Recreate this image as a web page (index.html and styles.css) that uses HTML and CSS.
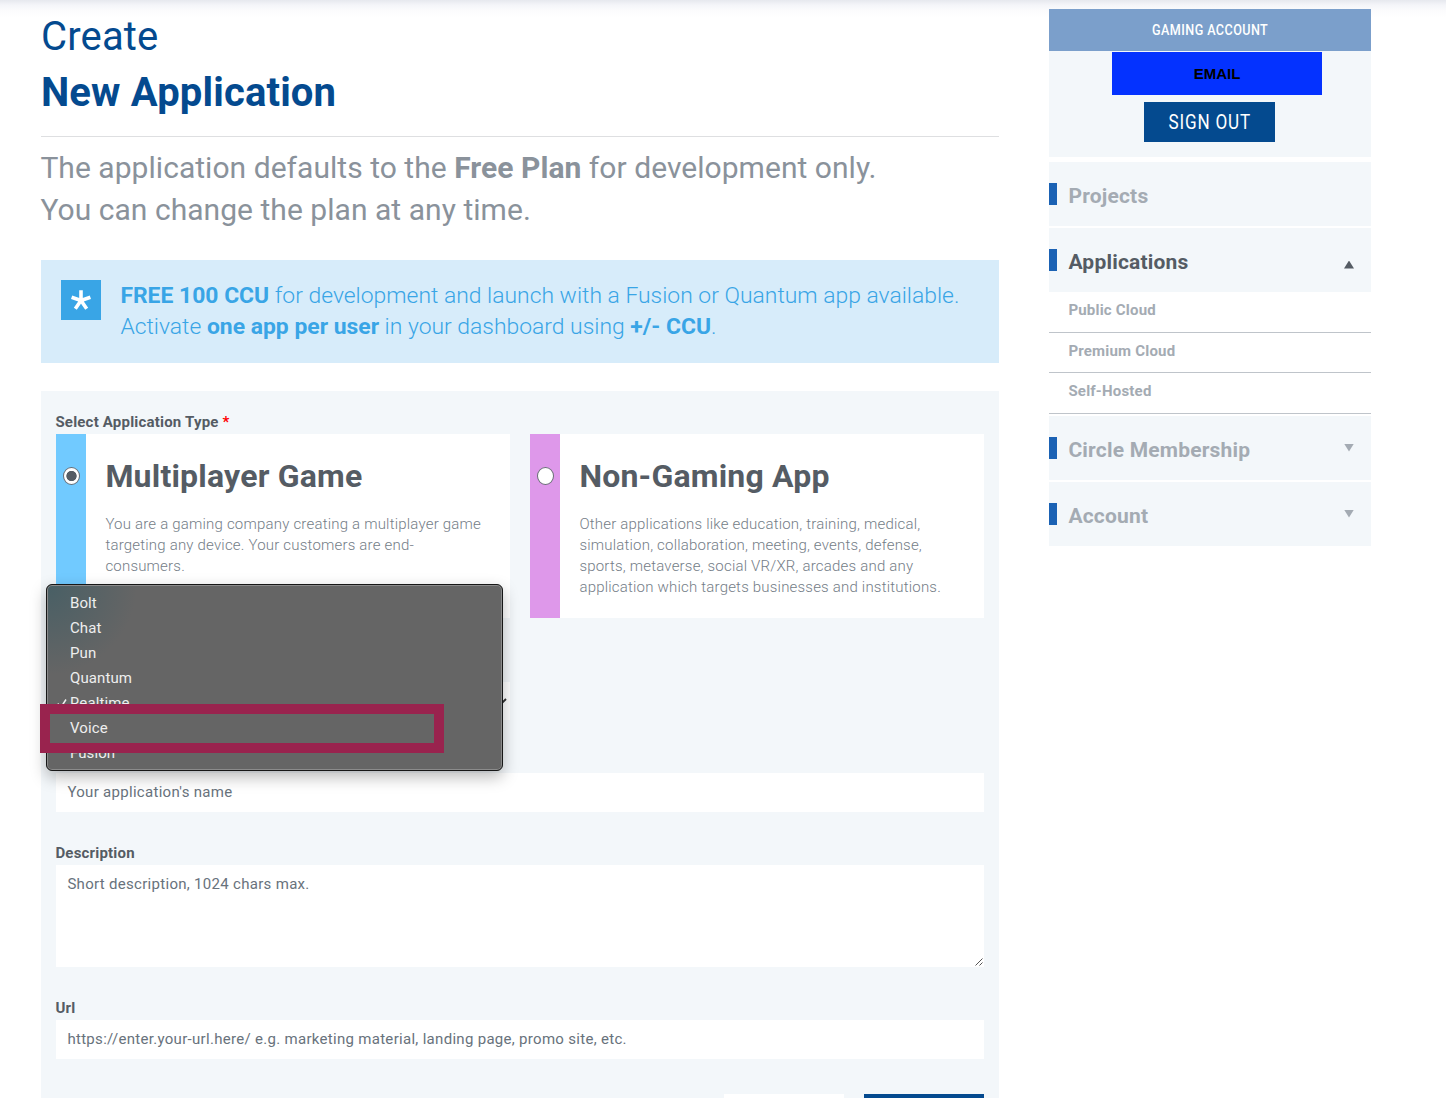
FILE: index.html
```html
<!DOCTYPE html>
<html lang="en">
<head>
<meta charset="utf-8">
<title>Create New Application</title>
<link rel="stylesheet" href="styles.css">
</head>
<body>
<div class="page">
  <main class="main">
    <h1 class="title">Create<br><strong>New Application</strong></h1>
    <p class="intro">The application defaults to the <strong>Free Plan</strong> for development only.<br>You can change the plan at any time.</p>
    <div class="notice">
      <svg class="notice-icon" viewBox="0 0 40 40"><rect width="40" height="40" fill="#39a5e6"/><path d="M20 20.5V10.300M20 20.500L10.600 17.200M20 20.500L29.400 17.200M20 20.500L14.300 28.700M20 20.500L25.700 28.700" stroke="#fff" stroke-width="3.600"/></svg>
      <p class="notice-text"><strong>FREE 100 CCU</strong> for development and launch with a Fusion or Quantum app available.<br>Activate <strong>one app per user</strong> in your dashboard using <strong>+/- CCU</strong>.</p>
    </div>
    <form class="form">
      <div class="label">Select Application Type <span class="required">*</span></div>
      <div class="cards">
        <div class="card">
          <div class="stripe blue"><span class="radio checked"></span></div>
          <div class="card-body"><h2>Multiplayer Game</h2><p>You are a gaming company creating a multiplayer game<br>targeting any device. Your customers are end-<br>consumers.</p></div>
        </div>
        <div class="card">
          <div class="stripe pink"><span class="radio"></span></div>
          <div class="card-body"><h2>Non-Gaming App</h2><p>Other applications like education, training, medical,<br>simulation, collaboration, meeting, events, defense,<br>sports, metaverse, social VR/XR, arcades and any<br>application which targets businesses and institutions.</p></div>
        </div>
      </div>
      <div class="select">
        <svg class="chevron" viewBox="0 0 10 6"><path d="M1 1L5 5L9 1" fill="none" stroke="#333" stroke-width="1.800"/></svg>
        <div class="menu">
          <div class="option">Bolt</div>
          <div class="option">Chat</div>
          <div class="option">Pun</div>
          <div class="option">Quantum</div>
          <div class="option"><svg class="tick" viewBox="0 0 10 10"><path d="M.8 4.500L3.500 9L9 .5" fill="none" stroke="#eee" stroke-width="1.500"/></svg>Realtime</div>
          <div class="option">Voice</div>
          <div class="option">Fusion</div>
          <div class="marker"></div>
        </div>
      </div>
      <div class="field name">Your application's name</div>
      <div class="label">Description</div>
      <div class="field area">Short description, 1024 chars max.<svg class="grip" viewBox="0 0 8 8"><path d="M.5 7.500L7.500 .5M4.500 7.500L7.500 4.500" stroke="#555" stroke-width="1" fill="none"/></svg></div>
      <div class="label">Url</div>
      <div class="field">https://enter.your-url.here/ e.g. marketing material, landing page, promo site, etc.</div>
      <div class="actions"><span class="action"></span><span class="action primary"></span></div>
    </form>
  </main>
  <aside class="side">
    <div class="account">
      <div class="account-head"><span class="condensed">GAMING ACCOUNT</span></div>
      <div class="email">EMAIL</div>
      <div class="signout"><span class="condensed">SIGN OUT</span></div>
    </div>
    <nav class="nav">
      <div class="item">Projects</div>
      <div class="item active">Applications<span class="arrow up"></span></div>
      <div class="sub">
        <div class="sub-item">Public Cloud</div>
        <div class="sub-item short">Premium Cloud</div>
        <div class="sub-item">Self-Hosted</div>
      </div>
      <div class="item">Circle Membership<span class="arrow"></span></div>
      <div class="item">Account<span class="arrow"></span></div>
    </nav>
  </aside>
</div>
</body>
</html>
```
FILE: styles.css
```css
* { box-sizing: border-box; }
body {
  margin: 0;
  height: 1098px;
  overflow: hidden;
  font-family: Roboto, "Liberation Sans", sans-serif;
  color: #8a929b;
  background: linear-gradient(#e6e8ee 0, #f4f5f9 5px, #fcfcfd 11px, #fff 18px);
}
h1, h2, p { margin: 0; font-weight: 400; }
strong { font-weight: 700; }
.page { display: flex; gap: 50px; padding: 9px 75px 0 41px; height: 1098px; }
.main { width: 958px; }
.title {
  height: 128px;
  color: #044a8f;
  font-size: 40px;
  line-height: 56px;
  letter-spacing: .15px;
  border-bottom: 1px solid #dedfe1;
}
.intro { margin: 10px 0 0 -.6px; font-size: 30px; line-height: 42px; letter-spacing: .04px; white-space: nowrap; }
.notice {
  display: flex;
  gap: 19.4px;
  height: 103px;
  margin-top: 29px;
  padding: 20px;
  background: #d7ecfa;
  color: #39a5e6;
}
.notice-icon { width: 40px; height: 40px; flex: none; }
.notice-text { font-size: 22.9px; line-height: 31px; font-weight: 300; white-space: nowrap; }
.form {
  height: 720px;
  margin-top: 28px;
  padding: 22px 15px 0;
  background: #f3f7fa;
  font-size: 15px;
}
.label { height: 21px; margin-left: -.6px; line-height: 18px; font-weight: 700; color: #555c64; letter-spacing: .2px; }
.required { color: #f00; }
.cards { display: grid; grid-template-columns: 1fr 1fr; gap: 20px; height: 184px; }
.card { display: flex; background: #fff; }
.stripe { width: 30px; padding: 33px 0 0 7px; }
.blue { background: #71caff; }
.pink { background: #de98ea; }
.radio {
  display: block;
  width: 17px;
  height: 18px;
  border: 1px solid #686d75;
  border-radius: 50%;
  background: #fff;
}
.checked { background: radial-gradient(circle, #555c64 4.800px, #fff 5.500px); }
.card-body { padding: 20px 19.4px; }
.card-body h2 { color: #555c64; font-size: 32px; line-height: 44px; font-weight: 700; letter-spacing: .2px; }
.card-body p { margin-top: 16px; font-size: 15px; line-height: 21px; font-weight: 300; letter-spacing: .2px; white-space: nowrap; color: #747d87; }
.select { position: relative; width: 454px; height: 38px; margin-top: 64px; background: #fff; }
.chevron { position: absolute; right: 3px; top: 16px; width: 10px; height: 6px; }
.menu {
  position: absolute;
  left: -10px;
  top: -98px;
  width: 457px;
  height: 187px;
  padding-top: 6px;
  border: 1px solid #171717;
  border-radius: 6px;
  background: radial-gradient(ellipse 90px 90px at 0 0, #485f65, transparent), #656565;
  box-shadow: inset 0 0 0 1px #8b8b8b, 0 6px 16px rgba(0, 0, 0, .28);
  color: #eee;
}
.option { position: relative; height: 25px; padding-left: 23px; line-height: 25px; letter-spacing: .1px; }
.tick { position: absolute; left: 10px; top: 8px; width: 10px; height: 10px; }
.marker { position: absolute; left: -7px; top: 119px; width: 404px; height: 49px; border: 10px solid #99234e; }
.field { height: 39px; padding: 0 11.4px; background: #fff; color: #68727c; line-height: 38px; letter-spacing: .3px; }
.name { margin: 53px 0 32px; }
.area { position: relative; height: 102px; margin-bottom: 32px; }
.grip { position: absolute; right: 1px; bottom: 1px; width: 8px; height: 8px; }
.actions { display: flex; justify-content: flex-end; gap: 20px; margin-top: 35px; }
.action { width: 120px; height: 40px; background: #fff; }
.primary { background: #044a8f; }
.side { width: 322px; }
.account { height: 148px; background: #f3f7fa; display: flex; flex-direction: column; align-items: center; }
.account-head { width: 100%; height: 42px; line-height: 42px; text-align: center; background: #7b9fcb; color: #fff; font-size: 15px; font-weight: 500; }
.condensed { display: inline-block; transform: scaleX(.84); white-space: nowrap; }
.account-head .condensed { letter-spacing: .5px; }
.email {
  width: 210px;
  height: 43px;
  margin: 1px 0 7px 14px;
  background: #0432ff;
  color: #000;
  font: bold 15px/44px "Liberation Sans", sans-serif;
  text-align: center;
}
.signout { width: 131px; height: 40px; margin-right: 1px; line-height: 40px; background: #044a8f; color: #fff; font-size: 20.6px; text-align: center; letter-spacing: 1px; }
.signout .condensed { transform: scaleX(.83); }
.nav { display: flex; flex-direction: column; gap: 2px; margin-top: 5px; }
.item {
  display: flex;
  align-items: center;
  height: 64px;
  padding: 3px 17px 0 19.4px;
  background: linear-gradient(#1b62b4, #1b62b4) 0 21px / 8px 22px no-repeat #f3f7fa;
  color: #a4abb3;
  font-size: 21px;
  font-weight: 700;
  letter-spacing: .2px;
}
.active { color: #555c64; }
.arrow { width: 10px; height: 8px; margin: -4px 0 0 auto; background: currentColor; clip-path: polygon(0 0, 100% 0, 50% 100%); }
.up { margin-top: 6px; clip-path: polygon(0 100%, 100% 100%, 50% 0); }
.sub { margin-top: -2px; }
.sub-item { height: 41px; padding-left: 19.4px; line-height: 36px; border-bottom: 1px solid #bfc4ca; color: #a4abb3; font-size: 15px; font-weight: 700; letter-spacing: .2px; }
.short { height: 40px; }
```
